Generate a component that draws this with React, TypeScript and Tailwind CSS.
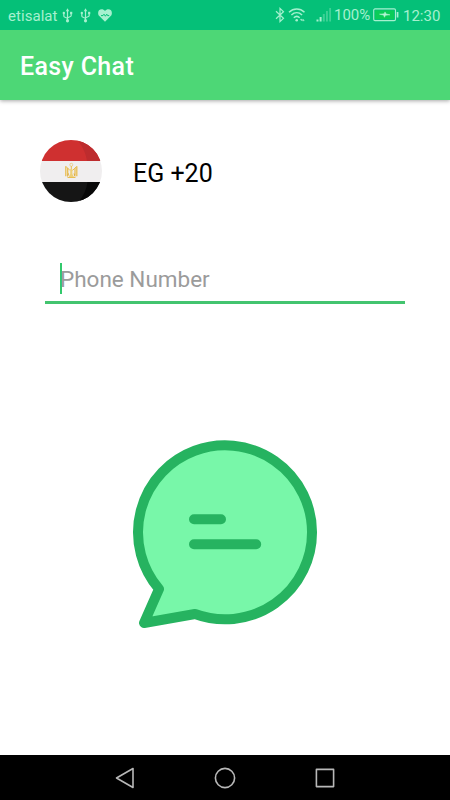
function UsbIcon() {
  return (
    <svg width="11" height="15" viewBox="0 0 12 15" preserveAspectRatio="none" fill="none" stroke="currentColor" strokeWidth="1.3">
      <path d="M6 3v9M2 5.5v2.8c0 1.2 4 1.2 4 2.4M10 5.5v2.3c0 1.2-4 1.2-4 2.4" />
      <path d="M6 .3l1.9 3H4.1z" fill="currentColor" stroke="none" />
      <circle cx="6" cy="12.8" r="1.7" fill="currentColor" stroke="none" />
      <circle cx="2" cy="5" r="1.3" fill="currentColor" stroke="none" />
      <path d="M8.8 3.8h2.4v2.4H8.8z" fill="currentColor" stroke="none" />
    </svg>
  );
}

function HeartIcon() {
  return (
    <svg width="14" height="13" viewBox="0 0 14 13">
      <path
        d="M7 12.7L1.3 7C-.3 5.3-.2 2.6 1 1.3 2.6-.3 5.4-.2 7 1.9 8.6-.2 11.4-.3 13 1.3c1.2 1.3 1.3 4-.3 5.7z"
        fill="currentColor"
      />
      <path d="M3 6.6h2l1-1.4 1.4 2 1.4-2 .8 1.4h1.6" fill="none" stroke="#05c078" strokeWidth="1" />
    </svg>
  );
}

function BluetoothIcon() {
  return (
    <svg width="10" height="16" viewBox="0 0 10 16" fill="none" stroke="currentColor" strokeWidth="1.2">
      <path d="M1 4.3l7.5 7L5 14.6V1.4l3.5 3.3L1 11.7" />
    </svg>
  );
}

function WifiIcon() {
  return (
    <svg width="18" height="14" viewBox="0 0 18 14" fill="none" stroke="currentColor" strokeWidth="1.5">
      <path d="M1 4.2c4.600-4.200 10.900-4.200 15.500 0M3.400 7c3.200-2.900 7.500-2.900 10.700 0M5.800 9.700c1.800-1.600 4.100-1.600 5.900 0" />
      <circle cx="8.7" cy="12.2" r="1.3" fill="currentColor" stroke="none" />
      <path d="M12.3 11.3l1.100 1.500 1.100-1.500zM14.300 12.800l1-1.500 1 1.500z" fill="currentColor" strokeWidth=".4" />
    </svg>
  );
}

function SignalIcon() {
  return (
    <svg width="16" height="14" viewBox="0 0 16 14" fill="currentColor">
      <path d="M.5 11.5h2v2h-2zM3.600 9h2v4.500h-2z" />
      <path d="M6.8 6h2v7.500h-2zM10 3h1.900v10.500H10zM13.200 0h1.800v13.500h-1.800z" opacity=".35" />
    </svg>
  );
}

function BatteryIcon() {
  return (
    <svg width="26" height="14" viewBox="0 0 26 14" fill="none">
      <rect x=".7" y=".9" width="21.8" height="11.7" rx="1.3" stroke="currentColor" strokeWidth="1.1" />
      <rect x="2.2" y="2.4" width="18.8" height="8.7" fill="#0bcc58" />
      <path d="M23.7 4h1.700v5.500h-1.700z" fill="currentColor" />
      <path d="M6.500 6.200l4.700-.4.800-1.900 1.200 2.100 3.800.8-4.500.5-1 2-1-2.200z" fill="#b5f5d5" stroke="#b5f5d5" strokeWidth=".5" />
    </svg>
  );
}

function EgyptFlag() {
  return (
    <svg width="64" height="64" viewBox="0 0 64 64">
      <defs>
        <clipPath id="flag">
          <circle cx="32" cy="32" r="31" />
        </clipPath>
      </defs>
      <g clipPath="url(#flag)">
        <path d="M0 0h64v22H0z" fill="#cf3030" />
        <path d="M0 22h64v21H0z" fill="#f0eeef" />
        <path d="M0 43h64v21H0z" fill="#151515" />
        <path d="M38 0c5 7 9 14 10 22h16V0z" fill="#bd2c2e" />
        <path d="M48.5 43c-1 8-4.500 15-10 21H64V43z" fill="#080808" />
      </g>
      <g fill="none" stroke="#e8bd52">
        <circle cx="32.3" cy="25.8" r="1.5" strokeWidth=".8" opacity=".7" />
        <path d="M26.8 27.200v10M28.700 29v7.500M37.800 27.200v10M36 29v7.500" strokeWidth="1.300" />
        <path d="M27 27.500l4 4M37.500 27.500l-4 4M28.500 38.500h8M32.300 27v3" strokeWidth="1" />
      </g>
      <path d="M31.2 30h2.200v5l1.600 3h-5.400l1.600-3z" fill="#edcf79" />
      <path d="M29.5 34.500l-1 3M35 34.500l1 3" stroke="#dda93b" strokeWidth="1" />
    </svg>
  );
}

function ChatBubble() {
  return (
    <svg width="190" height="196" viewBox="130 436 190 196" strokeLinecap="round" strokeLinejoin="round">
      <path
        d="M159 589A87 87 0 1 1 195 614L144 623Z"
        fill="#78f7a9"
        stroke="#26b360"
        strokeWidth="10"
      />
      <path d="M194 519.2h27M194 544.3h62.2" stroke="#26b360" strokeWidth="10" />
    </svg>
  );
}

function StatusBar() {
  return (
    <div className="z-10 flex h-[30px] items-center justify-between bg-[#05c078] pr-[10px] pl-2 text-[#a6f0cf]">
      <div className="flex items-center pt-px">
        <span className="w-[50px] pt-px text-[15px] tracking-[0.05px]">etisalat</span>
        <span className="ml-[4px]"><UsbIcon /></span>
        <span className="ml-[7px]"><UsbIcon /></span>
        <span className="ml-[7px]"><HeartIcon /></span>
      </div>
      <div className="flex items-center">
        <BluetoothIcon />
        <span className="ml-[3px]"><WifiIcon /></span>
        <span className="ml-[10px]"><SignalIcon /></span>
        <span className="ml-[2px] w-[36px] text-[15px] whitespace-nowrap">100%</span>
        <span className="ml-[3px]"><BatteryIcon /></span>
        <span className="ml-[4px] w-[37px] pt-[2px] text-[15px]">12:30</span>
      </div>
    </div>
  );
}

function NavigationBar() {
  return (
    <nav className="flex h-[45px] items-center justify-center gap-[76px] bg-black text-[#b8b8b8]">
      <svg width="24" height="24" viewBox="0 0 24 24" fill="none" stroke="currentColor" strokeWidth="1.6" strokeLinejoin="round">
        <path d="M3.5 12L20 2.500v19z" />
      </svg>
      <svg width="24" height="24" viewBox="0 0 24 24" fill="none" stroke="currentColor" strokeWidth="1.6">
        <circle cx="12" cy="12" r="9.6" />
      </svg>
      <svg width="24" height="24" viewBox="0 0 24 24" fill="none" stroke="currentColor" strokeWidth="1.6" strokeLinejoin="round">
        <rect x="3.4" y="3.4" width="17.2" height="17.2" />
      </svg>
    </nav>
  );
}

export default function App() {
  return (
    <div className="flex h-[800px] w-[450px] flex-col overflow-hidden bg-white font-['Roboto',sans-serif]">
      <StatusBar />
      <header className="flex h-[70px] items-center bg-[#4dd776] px-5 pt-[3px] shadow-[0_1px_4px_rgba(0,0,0,0.35)]">
        <h1 className="text-[25px] font-medium tracking-[0.35px] text-white">Easy Chat</h1>
      </header>

      <main className="flex flex-1 flex-col">
        <div className="mt-[39px] ml-[39px] flex h-16 items-center gap-[30px]">
          <EgyptFlag />
          <span className="pt-[5px] text-[25px] text-black">EG +20</span>
        </div>

        {/* Phone input */}
        <div className="mx-[45px] mt-[50px] flex h-[51px] items-center border-b-[3px] border-[#43c46f] pl-[15px]">
          <span className="mt-[2px] h-[31px] w-[2px] bg-[#32c96c]" />
          <span className="-ml-[2px] pt-[5px] text-[22.5px] text-[#9b9b9b]">Phone Number</span>
        </div>

        <div className="mt-[132px] flex justify-center">
          <ChatBubble />
        </div>
      </main>

      <NavigationBar />
    </div>
  );
}
